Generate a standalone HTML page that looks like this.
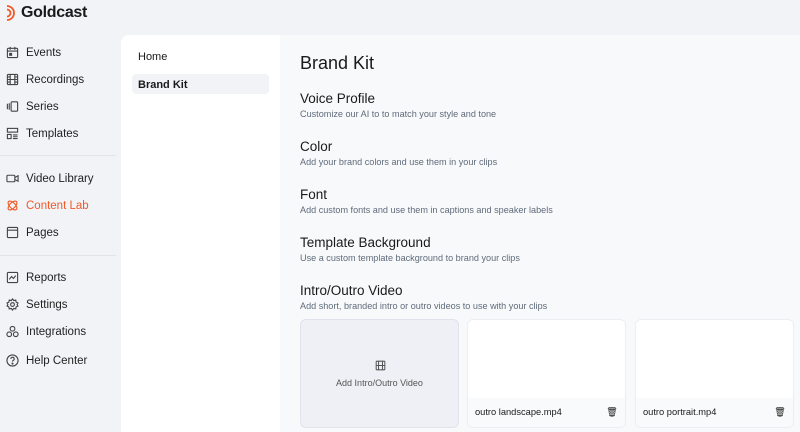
<!DOCTYPE html>
<html><head><style>
*{margin:0;padding:0;box-sizing:border-box}
body{width:800px;height:432px;overflow:hidden;background:#f1f3f7;font-family:"Liberation Sans",sans-serif;position:relative;color:#1a1a1a}
.logo{position:absolute;left:5px;top:4px;font-size:16px;font-weight:600;letter-spacing:-0.3px;display:flex;align-items:center;gap:4px}
.nav{position:absolute;left:6px;font-size:11.5px;display:flex;align-items:center;gap:7px;color:#222}
.nav svg{width:13px;height:13px}
.sep{position:absolute;left:0;width:116px;height:1px;background:#e1e4ea}
.panel{position:absolute;left:121px;top:35px;width:679px;height:397px;background:#f8f9fb;border-top-left-radius:8px;overflow:hidden}
.mid{position:absolute;left:0;top:0;width:159px;height:100%;background:#fff}
.mid .it{position:absolute;left:11px;width:137px;height:20px;font-size:11px;padding:5px 6px;border-radius:4px}
.h1{position:absolute;left:179px;top:18px;font-size:18px;font-weight:500}
.sec{position:absolute;left:179px}
.sec b{display:block;font-size:13.5px;font-weight:500}
.sec span{display:block;font-size:9.1px;color:#5f6b7a;margin-top:3px}
.card{position:absolute;top:284px;width:159px;height:109px;border-radius:6px;background:#fff;border:1px solid #eceef2;overflow:hidden}
.card .ft{position:absolute;bottom:0;left:0;right:0;height:29px;background:#f9fafb;font-size:9.3px;padding:9px 7px;display:flex;justify-content:space-between}
</style></head><body>
<div class="logo"><svg width="12" height="18" viewBox="0 0 12 18"><path d="M2 2a7 7 0 0 1 0 14M2 5.5a3.5 3.5 0 0 1 0 7" stroke="#f05a28" stroke-width="1.8" fill="none"/></svg>Goldcast</div>

<div class="nav" style="top:46px"><svg viewBox="0 0 14 14" fill="none" stroke="#444" stroke-width="1.2"><rect x="1.5" y="2.5" width="11" height="10" rx="1"/><path d="M1.5 5.5h11M4.5 1v3M9.5 1v3"/><rect x="4" y="8" width="2" height="2" fill="#444"/></svg>Events</div>
<div class="nav" style="top:73px"><svg viewBox="0 0 14 14" fill="none" stroke="#444" stroke-width="1.2"><rect x="1.5" y="1.5" width="11" height="11" rx="1"/><path d="M4.5 1.5v11M9.5 1.5v11M1.5 7h11M1.5 4.3h3M1.5 9.7h3M9.5 4.3h3M9.5 9.7h3"/></svg>Recordings</div>
<div class="nav" style="top:100px"><svg viewBox="0 0 14 14" fill="none" stroke="#444" stroke-width="1.2"><path d="M1.5 4v6M3.5 3.5v7"/><rect x="5.5" y="2" width="7" height="10" rx="1"/></svg>Series</div>
<div class="nav" style="top:127px"><svg viewBox="0 0 14 14" fill="none" stroke="#444" stroke-width="1.2"><rect x="1.5" y="1.5" width="11" height="4"/><rect x="1.5" y="8" width="4" height="4.5"/><path d="M7.5 8.5h5M7.5 10.5h5M7.5 12.5h5"/></svg>Templates</div>
<div class="sep" style="top:155px"></div>
<div class="nav" style="top:172px"><svg viewBox="0 0 14 14" fill="none" stroke="#444" stroke-width="1.2"><rect x="1" y="3.5" width="8.5" height="7" rx="1"/><path d="M9.5 6l3.5-2v6l-3.5-2"/></svg>Video Library</div>
<div class="nav" style="top:199px;color:#f05a28"><svg viewBox="0 0 14 14" fill="none" stroke="#f05a28" stroke-width="1.2"><ellipse cx="7" cy="7" rx="6" ry="3" transform="rotate(45 7 7)"/><ellipse cx="7" cy="7" rx="6" ry="3" transform="rotate(-45 7 7)"/></svg>Content Lab</div>
<div class="nav" style="top:226px"><svg viewBox="0 0 14 14" fill="none" stroke="#444" stroke-width="1.2"><rect x="1.5" y="1.5" width="11" height="11" rx="1"/><path d="M1.5 4.5h11"/></svg>Pages</div>
<div class="sep" style="top:255px"></div>
<div class="nav" style="top:271px"><svg viewBox="0 0 14 14" fill="none" stroke="#444" stroke-width="1.2"><rect x="1.5" y="1.5" width="11" height="11" rx="1"/><path d="M3.5 9l2.5-3 2 2 2.5-3"/></svg>Reports</div>
<div class="nav" style="top:298px"><svg viewBox="0 0 14 14" fill="none" stroke="#444" stroke-width="1.2"><circle cx="7" cy="7" r="2"/><path d="M7 1l1.3 1.8 2.2-.6.4 2.2 2 1L12 7l.9 1.6-2 1-.4 2.2-2.2-.6L7 13l-1.3-1.8-2.2.6-.4-2.2-2-1L2 7l-.9-1.6 2-1 .4-2.2 2.2.6z"/></svg>Settings</div>
<div class="nav" style="top:325px"><svg viewBox="0 0 14 14" fill="none" stroke="#444" stroke-width="1.2"><circle cx="7" cy="4" r="2.5"/><circle cx="3.5" cy="10" r="2.5"/><circle cx="10.5" cy="10" r="2.5"/></svg>Integrations</div>
<div class="nav" style="top:354px"><svg viewBox="0 0 14 14" fill="none" stroke="#444" stroke-width="1.2"><circle cx="7" cy="7" r="6"/><path d="M5.2 5.3a1.8 1.8 0 1 1 2.4 1.7c-.5.2-.6.6-.6 1.2"/><circle cx="7" cy="10.3" r=".5" fill="#444"/></svg>Help Center</div>

<div class="panel">
<div class="mid">
<div class="it" style="top:11px">Home</div>
<div class="it" style="top:39px;background:#f1f3f7;font-weight:600">Brand Kit</div>
</div>
<div class="h1">Brand Kit</div>
<div class="sec" style="top:56px"><b>Voice Profile</b><span>Customize our AI to to match your style and tone</span></div>
<div class="sec" style="top:104px"><b>Color</b><span>Add your brand colors and use them in your clips</span></div>
<div class="sec" style="top:152px"><b>Font</b><span>Add custom fonts and use them in captions and speaker labels</span></div>
<div class="sec" style="top:200px"><b>Template Background</b><span>Use a custom template background to brand your clips</span></div>
<div class="sec" style="top:248px"><b>Intro/Outro Video</b><span>Add short, branded intro or outro videos to use with your clips</span></div>
<div class="card" style="left:179px;background:#eef0f6;border-color:#dfe3ec;height:109px">
<svg style="position:absolute;left:74px;top:40px" width="11" height="11" viewBox="0 0 14 14" fill="none" stroke="#555" stroke-width="1.3"><rect x="1.5" y="1.5" width="11" height="11" rx="1"/><path d="M4.5 1.5v11M9.5 1.5v11M1.5 7h11"/></svg>
<div style="position:absolute;top:58px;width:100%;text-align:center;font-size:9px;color:#555">Add Intro/Outro Video</div></div>
<div class="card" style="left:346px"><div class="ft"><span>outro landscape.mp4</span><span>🗑</span></div></div>
<div class="card" style="left:514px"><div class="ft"><span>outro portrait.mp4</span><span>🗑</span></div></div>
</div>
</body></html>
